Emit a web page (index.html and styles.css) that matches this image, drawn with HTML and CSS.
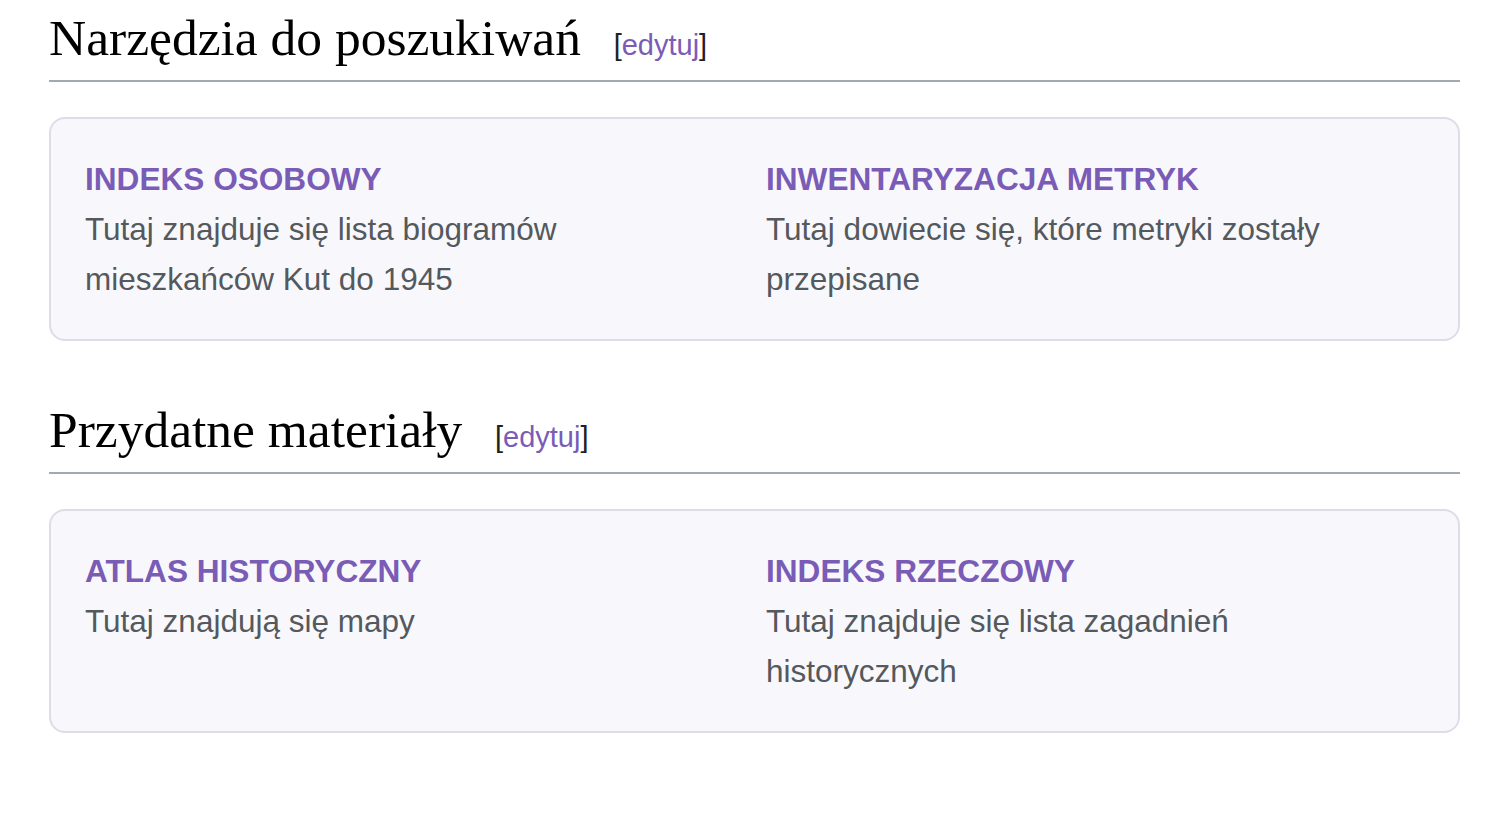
FILE: index.html
```html
<!doctype html>
<html lang="pl">
  <head>
    <meta charset="UTF-8" />
    <meta name="viewport" content="width=device-width, initial-scale=1.0" />
    <title>Narzędzia do poszukiwań</title>
    <link rel="stylesheet" href="styles.css">
  </head>
  <body>
    <div class="content">
      <h2 class="section-title">
        <span class="headline">Narzędzia do poszukiwań</span>
        <span class="editsection">[<a href="#">edytuj</a>]</span>
      </h2>
      <div class="card">
        <div class="card-item">
          <a class="card-title" href="#">INDEKS OSOBOWY</a>
          <p>Tutaj znajduje się lista biogramów mieszkańców Kut do 1945</p>
        </div>
        <div class="card-item">
          <a class="card-title" href="#">INWENTARYZACJA METRYK</a>
          <p>Tutaj dowiecie się, które metryki zostały przepisane</p>
        </div>
      </div>

      <h2 class="section-title">
        <span class="headline">Przydatne materiały</span>
        <span class="editsection">[<a href="#">edytuj</a>]</span>
      </h2>
      <div class="card">
        <div class="card-item">
          <a class="card-title" href="#">ATLAS HISTORYCZNY</a>
          <p>Tutaj znajdują się mapy</p>
        </div>
        <div class="card-item">
          <a class="card-title" href="#">INDEKS RZECZOWY</a>
          <p>Tutaj znajduje się lista zagadnień historycznych</p>
        </div>
      </div>
    </div>
  </body>
</html>
```

FILE: styles.css
```css
body {
  margin: 0;
  padding: 0;
  background-color: #fff;
  color: #202122;
  font-family: "Liberation Sans", Arial, sans-serif;
}
.content {
  padding: 5px 40px 0 49px;
}
.section-title {
  margin: 0;
  padding-bottom: 8px;
  border-bottom: 2px solid #a2a9b1;
  font-weight: normal;
  line-height: 1.3;
}
.headline {
  font-family: "Liberation Serif", "DejaVu Serif", serif;
  font-size: 51.5px;
  color: #000;
}
.editsection {
  margin-left: 26px;
  font-family: "Liberation Sans", Arial, sans-serif;
  font-size: 29px;
  color: #202122;
}
.editsection a {
  color: #7a5cb6;
  text-decoration: none;
}
.card {
  display: grid;
  grid-template-columns: 1fr 1fr;
  column-gap: 23px;
  margin: 35px 0 56px;
  padding: 40px 34px 30px;
  background-color: #f8f8fc;
  border: 2px solid #dcdde9;
  border-radius: 16px;
  min-height: 150px;
}
.card-item {
  padding-right: 8px;
}
.card-title {
  display: block;
  font-size: 31.6px;
  font-weight: bold;
  line-height: 1.3;
  color: #7a5cb6;
  text-decoration: none;
}
.card-item p {
  margin: 4px 0 0;
  font-size: 31.5px;
  line-height: 50px;
  color: #54595d;
}
```
